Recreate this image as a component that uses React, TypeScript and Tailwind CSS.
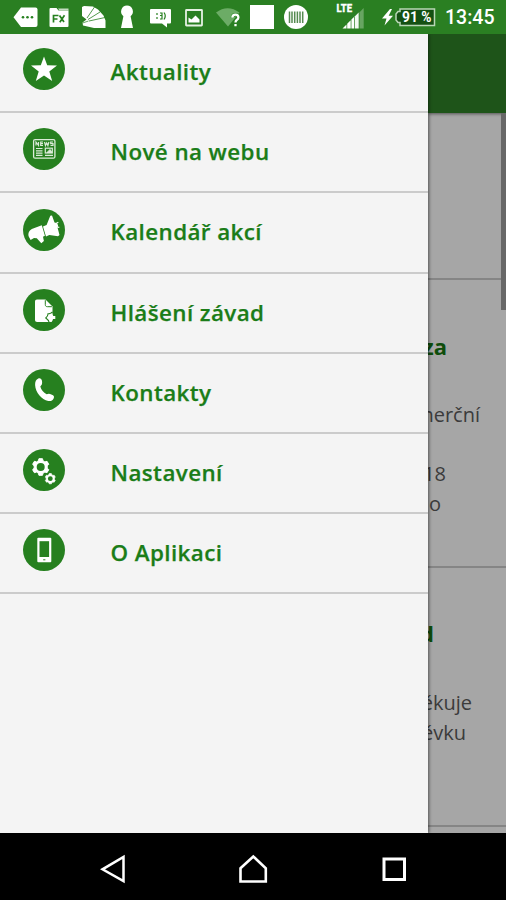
import type { ReactNode } from "react";

const GREEN = "#26801f";

function gearPath(cx: number, cy: number, outer: number, inner: number, teeth: number) {
  const points: string[] = [];
  const step = (Math.PI * 2) / teeth;
  for (let i = 0; i < teeth; i++) {
    const a = i * step - Math.PI / 2;
    for (const [offset, r] of [[-0.34, inner], [-0.2, outer], [0.2, outer], [0.34, inner]]) {
      const t = a + offset * step;
      points.push(`${(cx + r * Math.cos(t)).toFixed(2)},${(cy + r * Math.sin(t)).toFixed(2)}`);
    }
  }
  return points.join(" ");
}

const StarIcon = (
  <path d="M21 8.500l3.200 8.800 9.800.200-7.700 6 2.900 9.500-8.200-5.600-8.200 5.600 2.900-9.500-7.700-6 9.800-.200z" fill="#fff" />
);

const NewsIcon = (
  <g fill="none" stroke="#dcebd9">
    <rect x="10.6" y="11.6" width="21.3" height="18.6" rx="1.5" strokeWidth="1.3" />
    <path d="M13 17.500v-3.500l2.500 3.500v-3.500M20 14h-2.300v3.500H20M18 15.700h2M21.500 14l1 3.500 1.200-2.500 1.200 2.500 1-3.500M30 14h-2.300v1.700H30v1.800h-2.500" strokeWidth="1.200" />
    <path d="M13 20.500h6.500M13 22.800h6.500M13 25.100h6.500M13 27.400h6.500M22 27.400h8" strokeWidth="1.200" />
    <rect x="22.300" y="20.200" width="7" height="4.800" strokeWidth="1.200" />
    <path d="M24 24.500l3-3 2 3z" fill="#dcebd9" />
  </g>
);

const MegaphoneIcon = (
  <g fill="#fff">
    <path d="M5.600 27.200c-.8-3.500 1-6.500 4.500-7.700l8.700-3.300 3.100 10.500-1.900 1 .9 4.300-2.600 2.300-4.500-5-2.800-.4-3.400 2z" />
    <path d="M20 17.500l3.600-1.500 3.700-9.200 1.700-.3 2.500 7c2.700.2 4.600 2.700 3 5.100l2 7.500-1.500 1.200-8.700-1.400-3.300 1.500z" />
    <path d="M33 14.500l2.300-1.300M34 18l2.300.4" stroke="#fff" strokeWidth="1.200" />
  </g>
);

const FileIcon = (
  <g>
    <path d="M14 10.400h8.500l7 7.200v13.200c0 1.400-.8 2.200-2.200 2.200H14.200c-1.400 0-2.200-.8-2.200-2.200V12.400c0-1.300.8-2 2-2z" fill="#fff" />
    <path d="M22.300 11.200v4.300c0 1.600.8 2.200 2.200 2.200h4.400" fill="none" stroke={GREEN} strokeWidth="1" />
    <path d="M26 33c-.2-1.700-1.400-2.700-3.200-4 1.300-1.200 2.100-2.200 2.300-4.300 1.700.200 3-.2 4.400-1.700" fill="none" stroke={GREEN} strokeWidth="1.100" />
    <path d="M27.300 24.800l1.500-.3 1.500 2.400h2v3h-2.300l-1.700 3-1.700-1.700-2-2.200 1.700-1.500z" fill="#fff" />
  </g>
);

const PhoneIcon = (
  <path d="M15.300 9.400c1.800-.7 3.300.3 3.600 2.200.3 1.700.4 2.800-.2 4.100l-1.400 1.800c1 3.400 3.100 6.100 6.300 7.800 1.700-.8 3-.7 4.700.1l1.700.8c1.300.7 1.200 2.200.5 3.500-1 2-2.800 2.600-5.200 2.200-6.800-1.300-12.800-8.600-13.200-16-.1-3.300 1-5.600 3.200-6.500z" fill="#fff" />
);

const GearsIcon = (
  <g fill="#fff" stroke="#fff" strokeLinejoin="round">
    <polygon points={gearPath(17.7, 18, 8.5, 6.6, 6)} strokeWidth="1" />
    <polygon points={gearPath(27.3, 29.7, 5.2, 4.2, 6)} strokeWidth="0.7" />
    <circle cx="17.700" cy="18" r="4" fill={GREEN} stroke="none" />
    <circle cx="27.300" cy="29.700" r="2.400" fill={GREEN} stroke="none" />
  </g>
);

const DeviceIcon = (
  <g>
    <rect x="14.300" y="8.700" width="14" height="24.600" rx="1" fill="#fff" />
    <rect x="16.500" y="12.200" width="9.600" height="15.800" fill={GREEN} />
    <path d="M20.200 30.800h2.200" stroke={GREEN} strokeWidth="1" />
  </g>
);

const items: { label: string; icon: ReactNode }[] = [
  { label: "Aktuality", icon: StarIcon },
  { label: "Nové na webu", icon: NewsIcon },
  { label: "Kalendář akcí", icon: MegaphoneIcon },
  { label: "Hlášení závad", icon: FileIcon },
  { label: "Kontakty", icon: PhoneIcon },
  { label: "Nastavení", icon: GearsIcon },
  { label: "O Aplikaci", icon: DeviceIcon },
];

function StatusBar() {
  return (
    <header className="flex h-[34px] shrink-0 items-center overflow-hidden bg-[#2a7f22] text-white">
      <svg className="ml-[13px] shrink-0" width="25" height="34" viewBox="0 0 25 34">
        <path d="M8 7.500h14.500q2 0 2 2v15.500q0 2-2 2H8L0.500 17.200z" fill="#fff" />
        <g fill={GREEN}><circle cx="10" cy="17.200" r="1.300" /><circle cx="14.500" cy="17.200" r="1.300" /><circle cx="19" cy="17.200" r="1.300" /></g>
      </svg>
      <svg className="ml-[11px] shrink-0" width="21" height="34" viewBox="0 0 21 34">
        <path d="M0.500 9q0-1 1-1h6l2 2.500h10v15.500q0 1-1 1h-17q-1 0-1-1z" fill="#fff" />
        <path d="M9 8.500h10.500v2h-9z" fill="#c5dcc2" />
        <path d="M4.500 22.500v-7h5M4.500 19h4M10.500 15.500l4.500 6.500M15.500 15.200l-4.700 7" stroke={GREEN} strokeWidth="1.700" fill="none" />
      </svg>
      <svg className="ml-[11px] shrink-0" width="26" height="34" viewBox="0 0 26 34">
        <path d="M1 7l2-1 9 .5 5 3 5.500 6 2 5v7.500H13l-11-2.500-.5-3 4-3L1 16z" fill="#fff" />
        <path d="M6 18L13.500 7M7 19.500L19 12M8 21L24 17.500" stroke={GREEN} strokeWidth=".8" />
        <path d="M1 18.500l4 1M1.500 23l6-2" stroke={GREEN} strokeWidth=".7" />
      </svg>
      <svg className="ml-[13px] shrink-0" width="14" height="34" viewBox="0 0 14 34">
        <path d="M7 5.500a6 6 0 0 1 3.600 10.700l2.400 11.800H1l2.400-11.800A6 6 0 0 1 7 5.500z" fill="#fff" />
      </svg>
      <svg className="ml-[16px] shrink-0" width="22" height="34" viewBox="0 0 22 34">
        <path d="M1 9h19q1 0 1 1v12.500q0 1-1 1h-3v4l-5-4H1q-1 0-1-1V10q0-1 1-1z" fill="#fff" />
        <path d="M7 13v2M7 17v2M10 13h2v2.500h-2M12 15.500v3.500h-2M14 12.500q2.500 3.300 0 7" stroke={GREEN} strokeWidth="1.200" fill="none" />
      </svg>
      <svg className="ml-[13px] shrink-0" width="18" height="34" viewBox="0 0 18 34">
        <rect x="1" y="10" width="16" height="15.500" rx=".5" fill="none" stroke="#e6f1e4" strokeWidth="1.800" />
        <path d="M3.500 22.500v-5l3 2 4-4 4 4v3z" fill="#fff" />
      </svg>
      <svg className="ml-[13px] shrink-0" width="26" height="34" viewBox="0 0 26 34">
        <path d="M0 12.500Q11.500 4 23.500 12.500L12 26.500z" fill="#6cac66" />
        <path d="M16.300 17.700q.2-3 3.100-3 3 0 3 2.700 0 1.500-1.700 2.600-1.200.9-1.200 2.400M19.500 24v2.300" fill="none" stroke={GREEN} strokeWidth="3.200" />
        <path d="M16.300 17.700q.2-3 3.100-3 3 0 3 2.700 0 1.500-1.700 2.600-1.200.9-1.200 2.400M19.500 24v2.300" fill="none" stroke="#fff" strokeWidth="2.300" />
      </svg>
      <div className="ml-[8px] h-6 w-6 shrink-0 bg-white" />
      <svg className="ml-[10px] shrink-0" width="24" height="34" viewBox="0 0 24 34">
        <circle cx="12" cy="17" r="12" fill="#fff" />
        <path d="M5.500 11.500v11.500M8 11.500v11.500M10.700 11.500v11.500M13.400 11.500v11.500M16 11.500v11.500M18.700 11.500v11.500" stroke="#568a51" strokeWidth="1.500" />
      </svg>
      <svg className="ml-[27px] shrink-0" width="30" height="34" viewBox="0 0 30 34">
        <text x="1.500" y="12.300" fill="#fff" stroke="#fff" strokeWidth=".3" fontFamily="Roboto, sans-serif" fontSize="10.500" fontWeight="800" textLength="15.500" lengthAdjust="spacingAndGlyphs">LTE</text>
        <path d="M7.500 28.500L11.500 24.500v4zM12.200 28.500v-4.700l3.500-3.500v8.200zM16.400 28.500v-9l2.600-2.600v11.600z" fill="#fff" />
        <path d="M19.700 28.500V16.400l4-4v16.100z" fill="#f2f8f1" />
        <path d="M24.500 28.500V12.200l4.200-4.200v20.500z" fill="#68a562" />
      </svg>
      <svg className="ml-[17px] shrink-0" width="54" height="34" viewBox="0 0 54 34">
        <path d="M8 9L0 18.500h4.500L2.500 25.500l8.500-9.700H6.700L10 9z" fill="#fff" />
        <path d="M18 9h34.500v16.500H18v-3h-2l-2-2.500v-6l2-2.500h2z" fill="#145012" stroke="#b9d6b6" strokeWidth="1.500" />
        <text x="20" y="22" fill="#fff" fontFamily="Roboto, sans-serif" fontSize="14" fontWeight="700" textLength="29.500" lengthAdjust="spacingAndGlyphs">91 %</text>
      </svg>
      <span className="ml-[9px] mt-[2px] whitespace-nowrap font-['Roboto',sans-serif] text-[19.5px] font-medium leading-none">13:45</span>
    </header>
  );
}

function Drawer() {
  return (
    <nav className="relative z-10 flex w-[428px] shrink-0 flex-col bg-[#f4f4f4] shadow-[1px_0_3px_rgba(0,0,0,0.5)]">
      <ul className="-mt-px">
        {items.map(({ label, icon }) => (
          <li key={label} className="flex h-[80.2px] items-start border-b-2 border-[#cbcbcb] pl-[23px]">
            <svg className="mt-[15.3px] shrink-0" width="42" height="42" viewBox="0 0 42 42">
              <circle cx="21" cy="21" r="21" fill={GREEN} />
              {icon}
            </svg>
            <span className="ml-[45.5px] mt-[24px] whitespace-nowrap font-['Open_Sans',sans-serif] text-[22.4px] font-[650] leading-[30px] tracking-[0.4px] text-[#1b7d18] [-webkit-text-stroke:0.25px_#1b7d18]">
              {label}
            </span>
          </li>
        ))}
      </ul>
    </nav>
  );
}

function ArticleLine({ children, className }: { children: ReactNode; className: string }) {
  return (
    <p className={`flex justify-end whitespace-nowrap font-['Open_Sans',sans-serif] text-[20px] leading-[30px] text-[#3b3b3b] ${className}`}>
      {children}
    </p>
  );
}

function DimmedPage() {
  return (
    <main className="flex min-w-0 flex-1 flex-col overflow-hidden bg-[#a6a6a6]">
      <div className="h-[79px] shrink-0 bg-[#1e5419] shadow-[0_1px_3px_rgba(0,0,0,0.5)]" />
      <div className="flex h-[167px] shrink-0 items-start justify-end border-b-2 border-[#858585]">
        <div className="h-[197px] w-[5px] shrink-0 bg-[#686868]" />
      </div>
      <section className="h-[288px] shrink-0 border-b-2 border-[#858585]">
        <ArticleLine className="pr-[59px] pt-[51px] text-[22px]! font-bold text-[#0e4d0b]!">za</ArticleLine>
        <ArticleLine className="pr-[26px] pt-[39px]">komerční</ArticleLine>
        <ArticleLine className="pr-[60px] pt-[29px]">18</ArticleLine>
        <ArticleLine className="pr-[65px]">o</ArticleLine>
      </section>
      <section className="h-[259px] shrink-0 border-b-2 border-[#858585]">
        <ArticleLine className="pr-[72px] pt-[50px] text-[22px]! font-bold text-[#0e4d0b]!">d</ArticleLine>
        <ArticleLine className="pr-[34px] pt-[40px]">děkuje</ArticleLine>
        <ArticleLine className="pr-[40px]">návštěvku</ArticleLine>
      </section>
    </main>
  );
}

function NavigationBar() {
  return (
    <footer className="flex h-[67px] shrink-0 items-center justify-between bg-black pl-[100px] pr-[99px] pt-[4px]">
      <svg width="27" height="30" viewBox="0 0 27 30">
        <path d="M23.500 3v24L2.500 15.300z" fill="none" stroke="#fff" strokeWidth="2.500" />
      </svg>
      <svg width="30" height="30" viewBox="0 0 30 30">
        <path d="M1.500 14.200L14.300 2.500l12.500 11.700v13.300H1.500z" fill="none" stroke="#fff" strokeWidth="2.600" />
      </svg>
      <svg width="26" height="26" viewBox="0 0 26 26">
        <rect x="3" y="3" width="20.500" height="20.500" fill="none" stroke="#fff" strokeWidth="3" />
      </svg>
    </footer>
  );
}

export default function App() {
  return (
    <div className="flex h-[900px] w-[506px] flex-col overflow-hidden bg-black">
      <StatusBar />
      <div className="flex h-[799px] shrink-0 overflow-hidden">
        <Drawer />
        <DimmedPage />
      </div>
      <NavigationBar />
    </div>
  );
}
